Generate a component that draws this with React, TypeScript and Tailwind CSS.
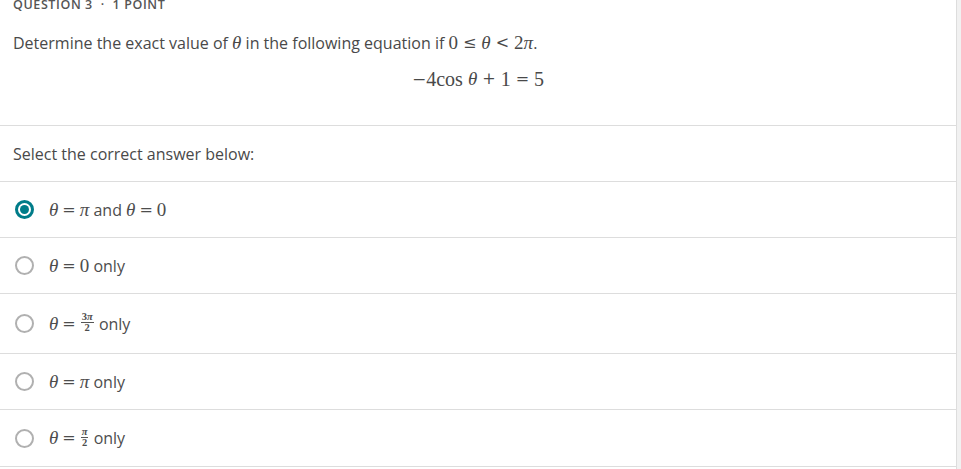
import React from "react";

function M({ children, className = "" }: { children: React.ReactNode; className?: string }) {
  return <span className={`font-['Liberation_Serif',serif] text-[19px] leading-[24px] ${className}`}>{children}</span>;
}
function Th() {
  return <span className="font-['Liberation_Serif',serif] italic text-[19px] leading-[24px]">θ</span>;
}
function Op({ c, tight }: { c: string; tight?: boolean }) {
  return (
    <span className={`font-['DejaVu_Serif',serif] text-[16px] leading-[24px] ${tight ? "mx-[4px]" : "mx-[5px]"}`}>{c}</span>
  );
}
function Frac({ num }: { num: React.ReactNode }) {
  return (
    <span className="inline-flex flex-col items-center font-['Liberation_Serif',serif] text-[10.5px] leading-[10px] font-bold mx-[1px] relative top-[-1px]">
      <span className="px-[1px]">{num}</span>
      <span className="block w-full border-t border-[#555]"></span>
      <span>2</span>
    </span>
  );
}

function Radio({ checked }: { checked?: boolean }) {
  if (checked)
    return (
      <span className="w-[19px] h-[19px] rounded-full border-[3px] border-[#007c89] flex items-center justify-center shrink-0">
        <span className="w-[9px] h-[9px] rounded-full bg-[#007c89]"></span>
      </span>
    );
  return <span className="w-[19px] h-[19px] rounded-full border-2 border-[#b0b0b0] shrink-0"></span>;
}

function Opt({ children, checked, h }: { children: React.ReactNode; checked?: boolean; h: string }) {
  return (
    <div className={`flex items-center border-b border-[#dddddd] pl-[15px] ${h}`}>
      <Radio checked={checked} />
      <div className="ml-[15px] flex items-center text-[16px] text-[#4d4d4d]">{children}</div>
    </div>
  );
}

export default function App() {
  return (
    <div className="w-[961px] h-[469px] overflow-hidden bg-white flex font-['Open_Sans',sans-serif] text-[#494949]">
      <div className="w-[957px] border-r border-[#dddddd] flex flex-col">
        <div className="px-[13px] h-[126px] border-b border-[#dddddd] flex flex-col">
          <div className="mt-[-3px] text-[12.5px] font-semibold tracking-[0.6px] text-[#555] leading-[16px]">
            QUESTION 3 <span className="mx-[4px]">·</span> 1 POINT
          </div>
          <div className="mt-[18px] text-[16px] leading-[24px] flex items-center">
            <span>Determine the exact value of&nbsp;</span>
            <Th />
            <span>&nbsp;in the following equation if&nbsp;</span>
            <M>0</M>
            <Op c="≤" />
            <Th />
            <Op c="<" />
            <M>2</M>
            <M className="italic">π</M>
            <span>.</span>
          </div>
          <div className="mt-[12px] flex justify-center text-[#494949]">
            <span className="flex items-center">
              <span className="font-['DejaVu_Serif',serif] text-[17px] leading-[24px]">−</span>
              <M className="text-[20px]">4cos&nbsp;</M>
              <Th />
              <Op c="+" />
              <M className="text-[20px]">1</M>
              <Op c="=" />
              <M className="text-[20px]">5</M>
            </span>
          </div>
        </div>
        <div className="h-[56px] border-b border-[#dddddd] px-[13px] flex items-center text-[16px] text-[#494949]">
          Select the correct answer below:
        </div>
        <Opt checked h="h-[56px]">
          <Th /><Op c="=" tight /><M className="italic">π</M><span>&nbsp;and&nbsp;</span><Th /><Op c="=" tight /><M>0</M>
        </Opt>
        <Opt h="h-[56px]">
          <Th /><Op c="=" tight /><M>0</M><span>&nbsp;only</span>
        </Opt>
        <Opt h="h-[60px]">
          <Th /><Op c="=" tight /><Frac num={<>3<span className="italic">π</span></>} /><span>&nbsp;only</span>
        </Opt>
        <Opt h="h-[56px]">
          <Th /><Op c="=" tight /><M className="italic">π</M><span>&nbsp;only</span>
        </Opt>
        <Opt h="h-[57px]">
          <Th /><Op c="=" tight /><Frac num={<span className="italic">π</span>} /><span>&nbsp;only</span>
        </Opt>
      </div>
      <div className="flex-1 bg-[#f1f1f1]"></div>
    </div>
  );
}
